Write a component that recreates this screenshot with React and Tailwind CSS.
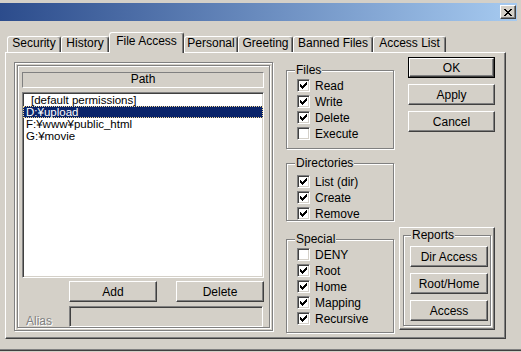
import React from 'react';

// Win2000-style "File Access" property page

const TABS = [
  { label: 'Security', w: 'w-[54px]' },
  { label: 'History', w: 'w-[48px]' },
  { label: 'File Access', w: 'w-[75px]', sel: true },
  { label: 'Personal', w: 'w-[54px]' },
  { label: 'Greeting', w: 'w-[55px]' },
  { label: 'Banned Files', w: 'w-[80px]' },
  { label: 'Access List', w: 'w-[73px]' },
];

const PATHS = [
  { text: '[default permissions]', pad: 'pl-[7px]' },
  { text: 'D:¥upload', pad: 'pl-[2px]', sel: true },
  { text: 'F:¥www¥public_html', pad: 'pl-[2px]' },
  { text: 'G:¥movie', pad: 'pl-[2px]' },
];

const raised =
  'border border-t-white border-l-white border-r-[#404040] border-b-[#404040] shadow-[inset_-1px_-1px_0_#808080]';
const sunken =
  'border border-t-[#808080] border-l-[#808080] border-r-white border-b-white shadow-[inset_1px_1px_0_#404040,inset_-1px_-1px_0_#d4d0c8]';
const etched = 'border border-[#808080] shadow-[inset_1px_1px_0_#fff,1px_1px_0_#fff]';

const CHECK = [
  [6, 0, 1], [5, 1, 2], [0, 2, 1], [4, 2, 3], [0, 3, 2], [3, 3, 3], [0, 4, 5], [1, 5, 3], [2, 6, 1],
];
const CROSS = [
  [0, 0, 2], [6, 0, 2], [1, 1, 2], [5, 1, 2], [2, 2, 4], [3, 3, 2], [2, 4, 4], [1, 5, 2], [5, 5, 2], [0, 6, 2], [6, 6, 2],
];

function Pixels({ rows, w, h }) {
  return (
    <svg width={w} height={h} viewBox={`0 0 ${w} ${h}`} shapeRendering="crispEdges">
      {rows.map(([x, y, len], i) => (
        <rect key={i} x={x} y={y} width={len} height="1" fill="#000" />
      ))}
    </svg>
  );
}

function Check({ on, label }) {
  return (
    <div className="flex items-center h-[13px]">
      <span className={`w-[13px] h-[13px] shrink-0 bg-white flex items-center justify-center ${sunken}`}>
        {on && <Pixels rows={CHECK} w={7} h={7} />}
      </span>
      <span className="ml-[5px]">{label}</span>
    </div>
  );
}

function Button({ children, className = '' }) {
  return (
    <div className={`h-[21px] flex items-center justify-center bg-[#d4d0c8] ${raised} ${className}`}>
      {children}
    </div>
  );
}

function Group({ title, className = '', children }) {
  return (
    <fieldset className={`${etched} ${className}`}>
      <legend className="-ml-[2px] px-[1px] bg-[#d4d0c8] leading-[12px]">{title}</legend>
      {children}
    </fieldset>
  );
}

export default function App() {
  return (
    <div className="w-[521px] h-[352px] bg-[#d4d0c8] overflow-hidden flex flex-col font-['Liberation_Sans',sans-serif] text-[12px] leading-[12px] text-black">
      <div className="h-[3px] shrink-0" />

      {/* title bar */}
      <div className="h-[18px] w-[517px] shrink-0 flex items-center justify-end pr-[1px] bg-[linear-gradient(to_right,#2c4c8c,#a6caf0)]">
        <div className={`w-[16px] h-[14px] flex items-center justify-center bg-[#d4d0c8] ${raised}`}>
          <Pixels rows={CROSS} w={8} h={7} />
        </div>
      </div>

      {/* tabs */}
      <div className="mt-[11px] -mb-px h-[21px] pl-[7px] flex items-end shrink-0 relative z-10">
        {TABS.map((t) => (
          <div
            key={t.label}
            className={`${t.w} flex justify-center bg-[#d4d0c8] border-l border-t border-r border-l-white border-t-white border-r-[#404040] shadow-[inset_-1px_0_0_#808080] rounded-t-[3px] ${
              t.sel ? 'h-[21px] pt-[2px]' : 'h-[16px] mb-px'
            }`}
          >
            {t.label}
          </div>
        ))}
      </div>

      {/* tab page */}
      <div className={`ml-[5px] w-[501px] h-[287px] shrink-0 flex items-start ${raised}`}>
        {/* path frame */}
        <div className={`ml-[8px] mt-[9px] w-[259px] h-[269px] flex ${etched}`}>
          <div className={`m-[2px] flex-1 flex flex-col ${etched}`}>
            <div className="ml-[4px] mt-[6px] w-[242px] h-[16px] flex justify-center border border-t-[#808080] border-l-[#808080] border-r-white border-b-white">
              Path
            </div>
            <div className={`ml-[4px] mt-[4px] w-[242px] h-[186px] bg-white pt-[1px] text-[11.5px] ${sunken}`}>
              {PATHS.map((p) => (
                <div
                  key={p.text}
                  className={`h-[12px] leading-[11px] border ${p.pad} ${
                    p.sel ? 'bg-[#0a246a] text-white border-dotted border-[#f5db95]' : 'border-transparent'
                  }`}
                >
                  {p.text}
                </div>
              ))}
            </div>
            <div className="mt-[3px] flex">
              <Button className="ml-[51px] w-[88px]">Add</Button>
              <Button className="ml-[19px] w-[88px]">Delete</Button>
            </div>
            <div className="mt-[4px] flex items-end">
              <span className="w-[51px] pl-[8px] text-[#808080] [text-shadow:1px_1px_0_#fff]">Alias</span>
              <div className={`w-[194px] h-[21px] bg-[#d4d0c8] ${sunken}`} />
            </div>
          </div>
        </div>

        {/* check groups */}
        <div className="ml-[13px] mt-[11px] w-[108px] flex flex-col">
          <Group title="Files" className="h-[85px] pl-[10px]">
            <div className="mt-[3px] flex flex-col gap-[3px]">
              <Check on label="Read" />
              <Check on label="Write" />
              <Check on label="Delete" />
              <Check label="Execute" />
            </div>
          </Group>
          <Group title="Directories" className="mt-[8px] h-[64px] pl-[10px]">
            <div className="mt-[6px] flex flex-col gap-[3px]">
              <Check on label="List (dir)" />
              <Check on label="Create" />
              <Check on label="Remove" />
            </div>
          </Group>
          <Group title="Special" className="mt-[12px] h-[100px] pl-[10px]">
            <div className="mt-[3px] flex flex-col gap-[3px]">
              <Check label="DENY" />
              <Check on label="Root" />
              <Check on label="Home" />
              <Check on label="Mapping" />
              <Check on label="Recursive" />
            </div>
          </Group>
        </div>

        {/* buttons */}
        <div className="ml-[5px] mt-[4px] w-[96px] flex flex-col">
          <div className="ml-[9px] w-[87px] h-[21px] border border-black flex">
            <div className={`flex-1 flex items-center justify-center ${raised}`}>OK</div>
          </div>
          <Button className="mt-[6px] ml-[9px] w-[87px]">Apply</Button>
          <Button className="mt-[6px] ml-[9px] w-[87px]">Cancel</Button>

          <div className={`mt-[95px] w-[96px] h-[103px] flex items-start ${raised}`}>
            <fieldset className={`ml-[3px] mt-[1px] w-[88px] h-[97px] pl-[6px] ${etched}`}>
              <legend className="ml-[1px] px-[1px] bg-[#d4d0c8] leading-[12px]">Reports</legend>
              <div className="mt-[5px] flex flex-col gap-[6px]">
                <Button className="w-[78px]">Dir Access</Button>
                <Button className="w-[78px]">Root/Home</Button>
                <Button className="w-[78px]">Access</Button>
              </div>
            </fieldset>
          </div>
        </div>
      </div>

      <div className="mt-[10px] h-px bg-[#808080] shrink-0" />
      <div className="h-px bg-[#404040] shrink-0" />
    </div>
  );
}
